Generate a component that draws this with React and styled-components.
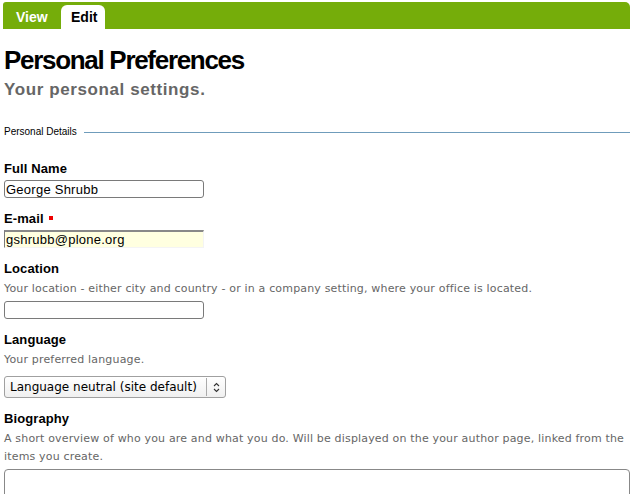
import React from "react";
import styled, { createGlobalStyle } from "styled-components";

const GlobalStyle = createGlobalStyle`
  html, body {
    margin: 0;
    padding: 0;
    background: #ffffff;
  }
  body {
    font-family: "Liberation Sans", Arial, sans-serif;
    color: #000;
  }
`;

const fields = [
  { id: "fullname", label: "Full Name", value: "George Shrubb" },
  { id: "email", label: "E-mail", value: "gshrubb@plone.org", required: true, highlight: true },
  {
    id: "location",
    label: "Location",
    help: "Your location - either city and country - or in a company setting, where your office is located.",
    value: "",
  },
];

const App = () => {
  return (
    <Page>
      <GlobalStyle />
      <TabBar>
        <Tab>View</Tab>
        <Tab $active>Edit</Tab>
      </TabBar>

      <Content>
        <Title>Personal Preferences</Title>
        <Subtitle>Your personal settings.</Subtitle>

        <Legend>
          <LegendText>Personal Details</LegendText>
          <LegendRule />
        </Legend>

        <Fields>
          {fields.map((field) => (
            <Field key={field.id}>
              <Label>
                {field.label}
                {field.required && <Required />}
              </Label>
              {field.help && <Help>{field.help}</Help>}
              <TextInput
                type="text"
                defaultValue={field.value}
                $highlight={field.highlight}
              />
            </Field>
          ))}

          <Field>
            <Label>Language</Label>
            <Help>Your preferred language.</Help>
            <SelectBox>
              <SelectText>Language neutral (site default)</SelectText>
              <SelectArrow>
                <svg width="7" height="11" viewBox="0 0 7 11">
                  <path d="M1 4 L3.5 1.5 L6 4" fill="none" stroke="#333" strokeWidth="1.1" />
                  <path d="M1 7 L3.5 9.5 L6 7" fill="none" stroke="#333" strokeWidth="1.1" />
                </svg>
              </SelectArrow>
            </SelectBox>
          </Field>

          <Field>
            <Label>Biography</Label>
            <Help>
              A short overview of who you are and what you do. Will be displayed on the your
              author page, linked from the items you create.
            </Help>
            <TextArea />
          </Field>
        </Fields>
      </Content>
    </Page>
  );
};

const Page = styled.div`
  padding: 2px 4px 0 3px;
  width: 634px;
  height: 494px;
  overflow: hidden;
  box-sizing: border-box;
`;

const TabBar = styled.div`
  display: flex;
  align-items: flex-end;
  height: 27px;
  background: #75ad0a;
  border-radius: 3px 5px 0 0;
`;

const Tab = styled.div`
  height: 24px;
  line-height: 24px;
  width: ${(p) => (p.$active ? "44px" : "58px")};
  padding-left: ${(p) => (p.$active ? "10px" : "13px")};
  box-sizing: border-box;
  font-size: 14px;
  font-weight: bold;
  color: ${(p) => (p.$active ? "#000" : "#fff")};
  background: ${(p) => (p.$active ? "#fff" : "transparent")};
  border-radius: 6px 6px 0 0;
`;

const Content = styled.div`
  padding: 0 0 0 1px;
`;

const Title = styled.h1`
  margin: 16px 0 0 0;
  font-size: 26px;
  line-height: 30px;
  font-weight: bold;
  letter-spacing: -1.3px;
`;

const Subtitle = styled.div`
  margin-top: 5px;
  font-size: 17px;
  line-height: 20px;
  font-weight: bold;
  color: #666;
  letter-spacing: 0.6px;
`;

const Legend = styled.div`
  display: flex;
  align-items: center;
  gap: 7px;
  margin-top: 25px;
  height: 14px;
`;

const LegendText = styled.span`
  font-size: 10px;
  line-height: 14px;
`;

const LegendRule = styled.div`
  flex: 1;
  border-top: 1px solid #6f9cbb;
`;

const Fields = styled.div`
  display: flex;
  flex-direction: column;
  gap: 13px;
  margin-top: 22px;
`;

const Field = styled.div`
  display: flex;
  flex-direction: column;
  align-items: flex-start;
`;

const Label = styled.div`
  display: flex;
  align-items: center;
  gap: 5px;
  font-size: 13px;
  line-height: 16px;
  font-weight: bold;
  letter-spacing: 0.1px;
`;

const Required = styled.span`
  width: 4px;
  height: 4px;
  margin-top: -3px;
  background: #e00;
`;

const Help = styled.div`
  margin-top: 3px;
  font-family: "DejaVu Sans", sans-serif;
  font-size: 11px;
  line-height: 18px;
  color: #666;
  letter-spacing: 0.17px;
`;

const TextInput = styled.input`
  display: block;
  margin: 3px 0 0 0;
  width: 200px;
  height: 18px;
  box-sizing: border-box;
  padding: 0 1px;
  font-family: "Liberation Sans", Arial, sans-serif;
  font-size: 13px;
  letter-spacing: 0.25px;
  color: #000;
  background: ${(p) => (p.$highlight ? "#ffffe0" : "#fff")};
  border: 1px solid #7a7a7a;
  border-top: ${(p) => (p.$highlight ? "2px solid #888" : "1px solid #7a7a7a")};
  border-radius: ${(p) => (p.$highlight ? "0" : "3px")};
  ${(p) => p.$highlight && "border-right-color: #f4f4f4; border-bottom-color: #f4f4f4;"}
  outline: none;
`;

const SelectBox = styled.div`
  display: flex;
  align-items: center;
  margin-top: 7px;
  width: 222px;
  height: 22px;
  box-sizing: border-box;
  border: 1px solid #a0a0a0;
  border-radius: 3px;
  background: linear-gradient(#ffffff, #f0f0f0);
`;

const SelectText = styled.span`
  flex: 1;
  padding-left: 5px;
  font-family: "DejaVu Sans", sans-serif;
  font-size: 12px;
  line-height: 18px;
  white-space: nowrap;
  border-right: 1px solid #aaa;
`;

const SelectArrow = styled.span`
  display: flex;
  align-items: center;
  justify-content: center;
  width: 18px;
`;

const TextArea = styled.div`
  margin-top: 3px;
  width: 626px;
  height: 60px;
  box-sizing: border-box;
  border: 1px solid #888;
  border-radius: 4px;
`;

export default App;
